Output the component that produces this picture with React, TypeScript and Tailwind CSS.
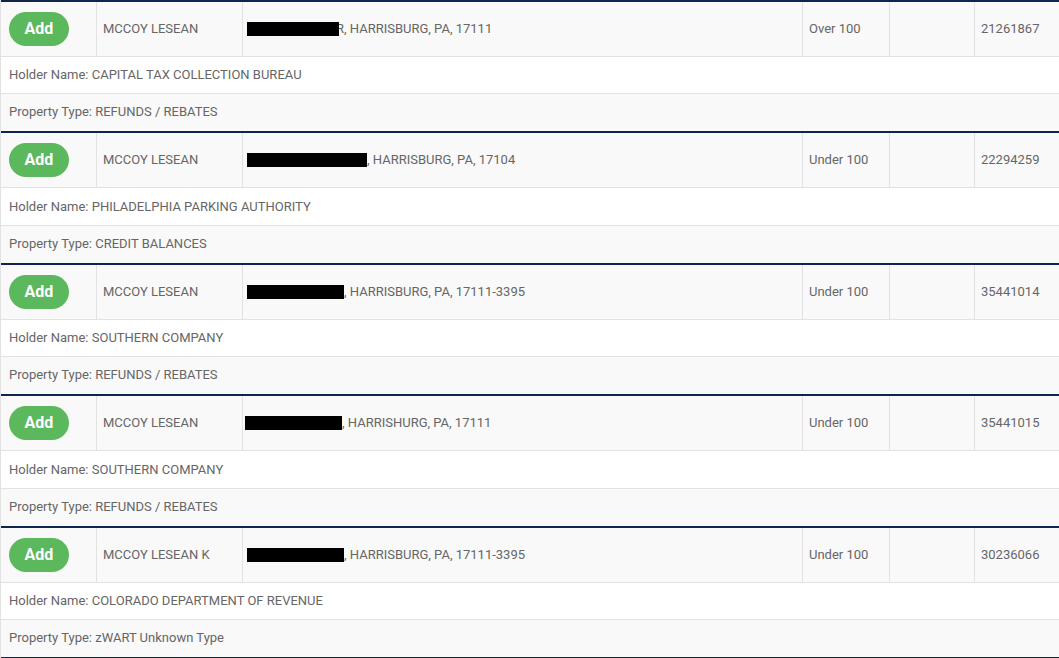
const ROWS = [
  {
    name: "MCCOY LESEAN",
    box: 92,
    overlap: true,
    addr: "R, HARRISBURG, PA, 17111",
    amount: "Over 100",
    id: "21261867",
    holder: "CAPITAL TAX COLLECTION BUREAU",
    type: "REFUNDS / REBATES",
  },
  {
    name: "MCCOY LESEAN",
    box: 120,
    overlap: false,
    addr: ", HARRISBURG, PA, 17104",
    amount: "Under 100",
    id: "22294259",
    holder: "PHILADELPHIA PARKING AUTHORITY",
    type: "CREDIT BALANCES",
  },
  {
    name: "MCCOY LESEAN",
    box: 97,
    overlap: false,
    addr: ", HARRISBURG, PA, 17111-3395",
    amount: "Under 100",
    id: "35441014",
    holder: "SOUTHERN COMPANY",
    type: "REFUNDS / REBATES",
  },
  {
    name: "MCCOY LESEAN",
    box: 97,
    overlap: false,
    shift: true,
    addr: ", HARRISHURG, PA, 17111",
    amount: "Under 100",
    id: "35441015",
    holder: "SOUTHERN COMPANY",
    type: "REFUNDS / REBATES",
  },
  {
    name: "MCCOY LESEAN K",
    box: 97,
    overlap: false,
    addr: ", HARRISBURG, PA, 17111-3395",
    amount: "Under 100",
    id: "30236066",
    holder: "COLORADO DEPARTMENT OF REVENUE",
    type: "zWART Unknown Type",
  },
];

export default function App() {
  return (
    <div
      className="w-[1059px] h-[658px] bg-white text-[13px] text-[#666] overflow-hidden"
      style={{ fontFamily: "Roboto, 'Liberation Sans', sans-serif" }}
    >
      <div className="border-l border-[#e2e2e2]">
        {ROWS.map((r, i) => (
          <div key={i} className="border-t-2 border-[#0e2550]">
            <div className="grid grid-cols-[95px_146px_560px_87px_85px_1fr] h-[55px] bg-[#f9f9f9] border-b border-[#e2e2e2]">
              <div className="flex items-center pl-[8px]">
                <button className="w-[60px] h-[34px] rounded-full bg-[#5cb85c] text-white font-bold text-[16px] leading-none">
                  Add
                </button>
              </div>
              <div className="flex items-center border-l border-[#e2e2e2] pl-[6px]">{r.name}</div>
              <div
                className={
                  "flex items-center border-l border-[#e2e2e2] " + (r.shift ? "pl-[2px]" : "pl-[4px]")
                }
              >
                <span
                  className={"relative z-10 inline-block h-[14px] bg-black " + (r.overlap ? "-mr-[3px]" : "")}
                  style={{ width: r.box }}
                />
                <span>{r.addr}</span>
              </div>
              <div className="flex items-center border-l border-[#e2e2e2] pl-[6px]">{r.amount}</div>
              <div className="border-l border-[#e2e2e2]" />
              <div className="flex items-center border-l border-[#e2e2e2] pl-[6px]">{r.id}</div>
            </div>
            <div
              className={
                "flex items-center bg-white border-b border-[#e2e2e2] pl-[8px] " +
                (i % 2 === 1 ? "h-[38px]" : "h-[37px]")
              }
            >
              Holder Name: {r.holder}
            </div>
            <div className="flex items-center h-[37px] bg-[#f9f9f9] pl-[8px] pb-[1px]">Property Type: {r.type}</div>
          </div>
        ))}
        <div className="border-t-2 border-[#0e2550]" />
      </div>
    </div>
  );
}
